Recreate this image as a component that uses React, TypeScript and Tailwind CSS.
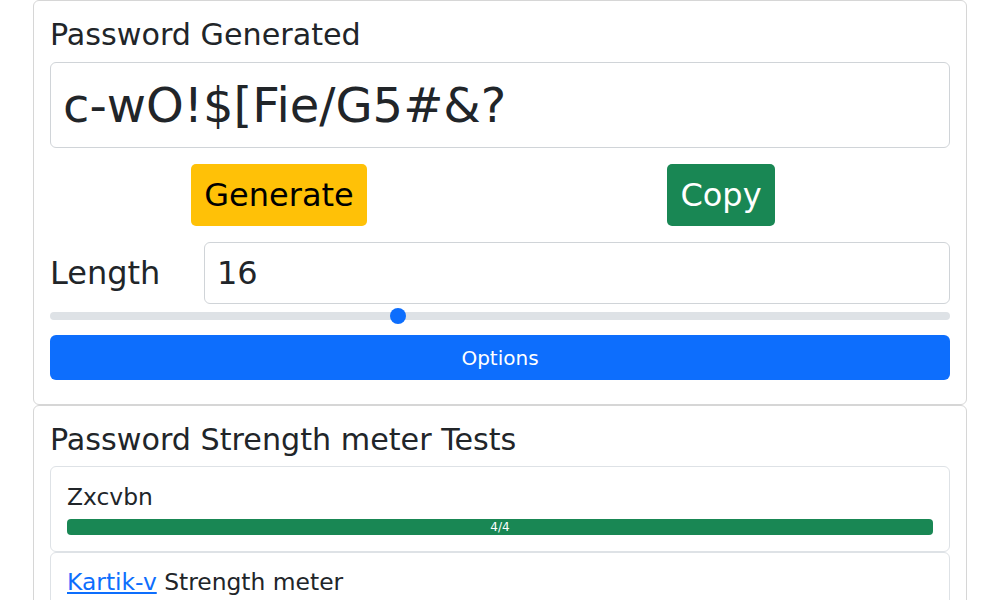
import React from "react";

export default function App() {
  return (
    <div
      className="min-h-[600px] bg-white text-[#212529]"
      style={{ fontFamily: '"DejaVu Sans", sans-serif' }}
    >
      <div className="mx-auto w-[934px]">
        {/* Card 1 */}
        <div className="rounded-md border border-[#d6d6d6] px-4 pt-4 pb-6">
          <h2 className="mb-[9px] text-[30.2px] leading-[1.2]">Password Generated</h2>
          <div className="flex h-[86px] items-center rounded-md border border-[#d0d4d8] px-3 text-[48px] leading-[1.5]">
            c-wO!$[Fie/G5#&amp;?
          </div>
          <div className="mt-4 grid grid-cols-2 px-2">
            <div className="flex justify-center">
              <button className="h-[62px] rounded-[5px] bg-[#ffc107] px-[13px] text-[32px] leading-[1.5] text-black">
                Generate
              </button>
            </div>
            <div className="flex justify-center">
              <button className="h-[62px] rounded-[5px] bg-[#198754] px-[13px] text-[32px] leading-[1.5] text-white">
                Copy
              </button>
            </div>
          </div>
          <div className="mt-4 flex items-center">
            <div className="w-[154px] text-[32px] leading-[1.5]">Length</div>
            <div className="flex h-[62px] flex-1 items-center rounded-md border border-[#d0d4d8] px-3 text-[32px] leading-[1.5]">
              16
            </div>
          </div>
          <div className="flex h-6 items-center">
            <div className="relative h-2 w-full rounded-full bg-[#dee2e6]">
              <div className="absolute left-[340px] top-1/2 h-4 w-4 -translate-y-1/2 rounded-full bg-[#0d6efd]" />
            </div>
          </div>
          <button className="mt-[7px] flex h-[45px] w-full items-center justify-center rounded-md bg-[#0d6efd] text-[20px] leading-[1.5] text-white">
            Options
          </button>
        </div>

        {/* Card 2 */}
        <div className="rounded-md border border-[#d6d6d6] px-4 pt-4 pb-4">
          <h2 className="mb-2 text-[30.2px] leading-[1.2]">Password Strength meter Tests</h2>
          <div className="flex flex-col">
            <div className="rounded-md border border-[#dee2e6] px-4 pt-4 pb-4">
              <div className="text-[23.4px] leading-[1.2]">Zxcvbn</div>
              <div className="mt-[7px] flex h-4 items-center justify-center rounded-[4px] bg-[#198754] text-[12px] leading-none text-white">
                4/4
              </div>
            </div>
            <div className="rounded-md border border-[#dee2e6] px-4 pt-[15px] pb-4">
              <div className="text-[23.4px] leading-[1.2]">
                <a href="#" className="text-[#0d6efd] underline">
                  Kartik-v
                </a>{" "}
                Strength meter
              </div>
              <div className="mt-2 h-4 rounded-[4px] bg-[#e9ecef]" />
            </div>
          </div>
        </div>
      </div>
    </div>
  );
}
